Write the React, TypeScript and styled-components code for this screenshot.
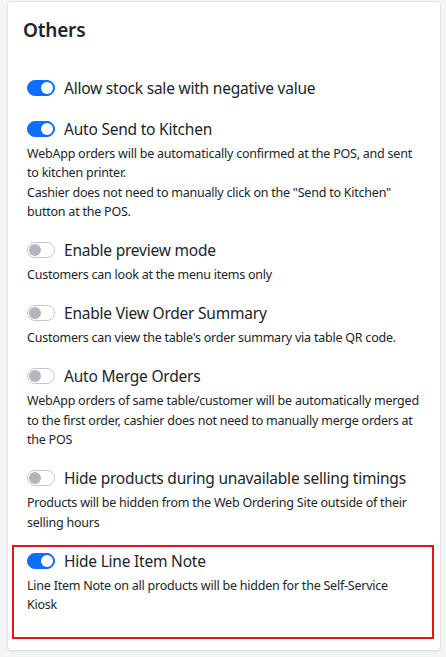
import styled, { createGlobalStyle } from "styled-components";

const GlobalStyle = createGlobalStyle`
    body {
        margin: 0;
        background: #f3f4f6;
        font-family: "Noto Sans", "Open Sans", sans-serif;
        color: #212529;
    }
`

type Option = {
    label: string;
    on: boolean;
    desc?: string[];
    highlight?: boolean;
}

const options: Option[] = [
    { label: "Allow stock sale with negative value", on: true },
    {
        label: "Auto Send to Kitchen",
        on: true,
        desc: [
            "WebApp orders will be automatically confirmed at the POS, and sent to kitchen printer.",
            "Cashier does not need to manually click on the \"Send to Kitchen\" button at the POS.",
        ],
    },
    { label: "Enable preview mode", on: false, desc: ["Customers can look at the menu items only"] },
    {
        label: "Enable View Order Summary",
        on: false,
        desc: ["Customers can view the table's order summary via table QR code."],
    },
    {
        label: "Auto Merge Orders",
        on: false,
        desc: [
            "WebApp orders of same table/customer will be automatically merged to the first order, cashier does not need to manually merge orders at the POS",
        ],
    },
    {
        label: "Hide products during unavailable selling timings",
        on: false,
        desc: ["Products will be hidden from the Web Ordering Site outside of their selling hours"],
    },
    {
        label: "Hide Line Item Note",
        on: true,
        highlight: true,
        desc: ["Line Item Note on all products will be hidden for the Self-Service Kiosk"],
    },
]

const OptionItem = ({ option }: { option: Option }) => (
    <Item>
        <LabelRow>
            <Switch $on={option.on} />
            <Label>{option.label}</Label>
        </LabelRow>
        {option.desc && (
            <Desc>
                {option.desc.map((line) => (
                    <div key={line}>{line}</div>
                ))}
            </Desc>
        )}
    </Item>
)

const App = () => {
    return (
        <Page>
            <GlobalStyle />
            <Card>
                <Title>Others</Title>
                <List>
                    {options.map((option) =>
                        option.highlight ? (
                            <Highlight key={option.label}>
                                <OptionItem option={option} />
                            </Highlight>
                        ) : (
                            <OptionItem key={option.label} option={option} />
                        )
                    )}
                </List>
            </Card>
        </Page>
    )
}

export const Page = styled.div`
    padding: 1px 5px 8px 7px;
    min-height: 657px;
    box-sizing: border-box;
`

export const Card = styled.div`
    background: #fff;
    border: 1px solid #dfe2e6;
    border-radius: 4px;
    padding: 16px 15px 11px 15px;
    box-shadow: 0 1px 2px rgba(0, 0, 0, 0.04);
`

export const Title = styled.h5`
    margin: 0 0 34px 0;
    font-size: 19px;
    line-height: 24px;
    font-weight: 600;
    letter-spacing: -0.2px;
`

export const List = styled.div`
    display: flex;
    flex-direction: column;
`

export const Item = styled.div`
    padding-left: 4px;
    margin-bottom: 16.5px;
`

export const Highlight = styled.div`
    margin: -4px -9px 0 -11px;
    padding: 2px 7px 6px 9px;
    border: 2px solid #e3161e;
`

export const LabelRow = styled.div`
    display: flex;
    align-items: center;
    gap: 9px;
    height: 24px;
`

export const Switch = styled.span<{ $on: boolean }>`
    position: relative;
    flex: none;
    width: 28px;
    height: 16px;
    box-sizing: border-box;
    border-radius: 8px;
    background: ${({ $on }) => ($on ? "#0d6efd" : "#fff")};
    border: 1px solid ${({ $on }) => ($on ? "#0d6efd" : "#c3c8cd")};

    &::after {
        content: "";
        position: absolute;
        top: 1px;
        left: ${({ $on }) => ($on ? "13px" : "1px")};
        width: 12px;
        height: 12px;
        border-radius: 50%;
        background: ${({ $on }) => ($on ? "#fff" : "#b1b7bd")};
    }
`

export const Label = styled.span`
    font-size: 15.5px;
    line-height: 24px;
    letter-spacing: -0.22px;
    white-space: nowrap;
`

export const Desc = styled.div`
    margin-top: 3px;
    padding-right: 6px;
    font-size: 12.5px;
    line-height: 19.5px;
    letter-spacing: -0.23px;
`

export default App;
